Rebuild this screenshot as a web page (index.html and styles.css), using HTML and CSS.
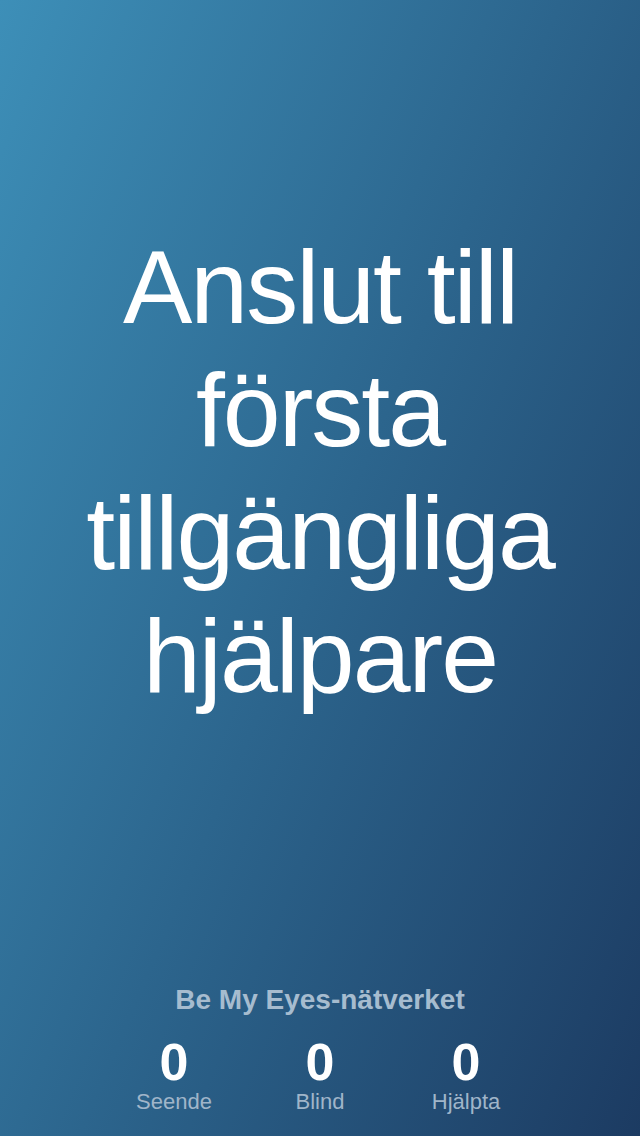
FILE: index.html
```html
<!DOCTYPE html>
<html lang="sv">
<head>
<meta charset="utf-8">
<title>Be My Eyes</title>
<link rel="stylesheet" href="styles.css">
</head>
<body>
<main class="screen">
  <h1 class="headline">Anslut till<br>första<br>tillgängliga<br>hjälpare</h1>
  <section class="network">
    <h2 class="network-title">Be My Eyes-nätverket</h2>
    <div class="stats">
      <div class="stat"><span class="stat-num">0</span><span class="stat-label">Seende</span></div>
      <div class="stat"><span class="stat-num">0</span><span class="stat-label">Blind</span></div>
      <div class="stat"><span class="stat-num">0</span><span class="stat-label">Hjälpta</span></div>
    </div>
  </section>
</main>
</body>
</html>
```

FILE: styles.css
```css
html, body {
  margin: 0;
  padding: 0;
}
body {
  width: 640px;
  height: 1136px;
  overflow: hidden;
  font-family: "Liberation Sans", Arial, sans-serif;
}
.screen {
  width: 640px;
  height: 1136px;
  box-sizing: border-box;
  background: linear-gradient(113deg, #3d8fb8 0%, #2c658d 50%, #1c3b62 100%);
  display: flex;
  flex-direction: column;
  align-items: center;
  color: #fff;
}
.headline {
  margin: 226px 0 0 0;
  font-weight: 400;
  font-size: 104px;
  letter-spacing: -2px;
  line-height: 123px;
  text-align: center;
  color: #fff;
}
.network {
  margin-top: auto;
  margin-bottom: 23px;
  display: flex;
  flex-direction: column;
  align-items: center;
}
.network-title {
  margin: 0;
  font-size: 28px;
  font-weight: 700;
  line-height: 28px;
  color: #a6bccf;
}
.stats {
  display: flex;
  margin-top: 22px;
}
.stat {
  width: 146px;
  display: flex;
  flex-direction: column;
  align-items: center;
}
.stat-num {
  font-size: 52px;
  font-weight: 700;
  line-height: 52px;
  color: #fff;
}
.stat-label {
  font-size: 22px;
  line-height: 22px;
  margin-top: 3px;
  color: #a0b5c9;
}
```
